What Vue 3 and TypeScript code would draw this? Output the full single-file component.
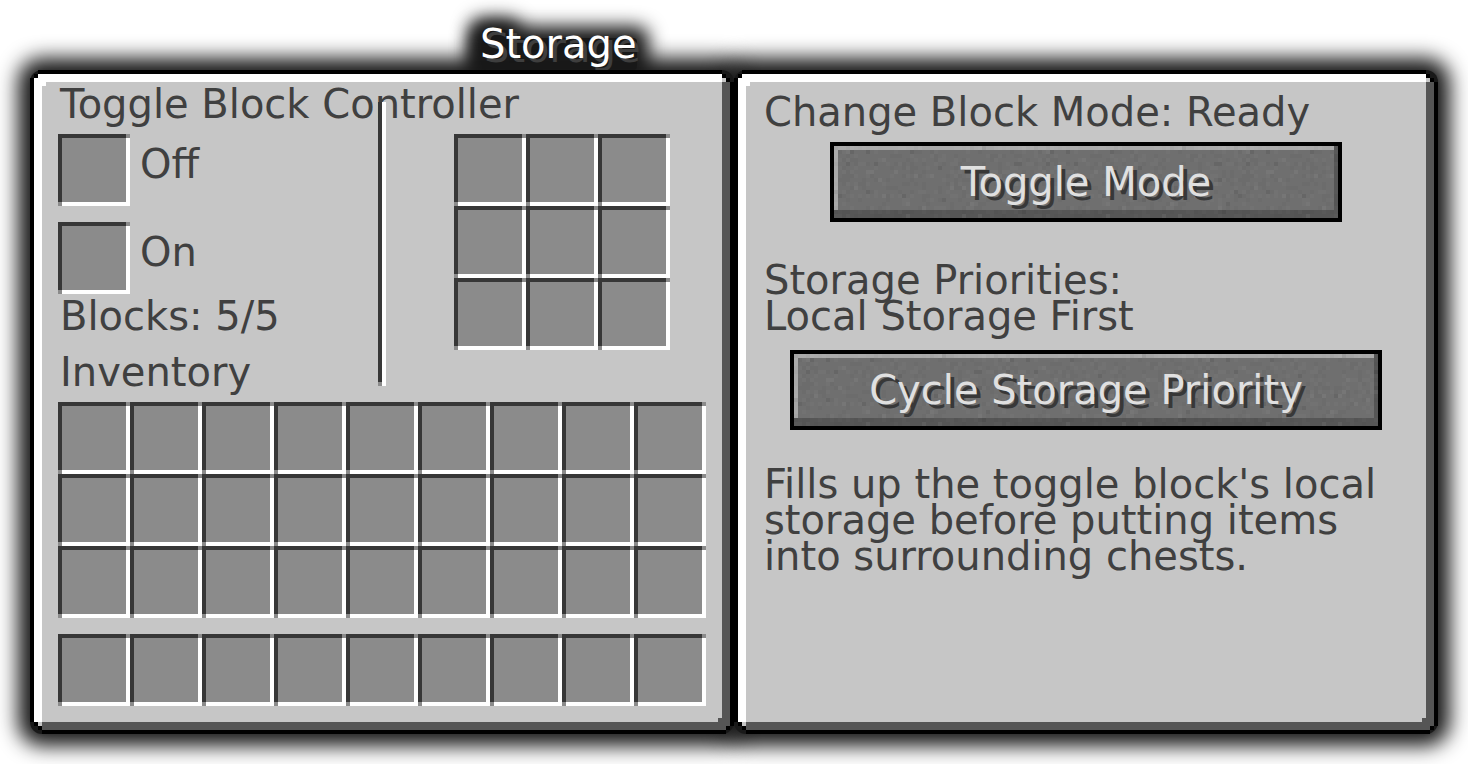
<script setup lang="ts">
interface Speck {
  x: number
  y: number
  tone: string
  alpha: number
}

const blockSlots = ['Off', 'On']
const priorityText = 'Storage Priorities:\nLocal Storage First'

// Stone grain, laid out on a grid of 4px cells with a fixed seed.
function grain(columns: number, rows: number): Speck[] {
  const specks: Speck[] = []
  let seed = 7919
  const next = () => {
    seed = (seed * 16807) % 2147483647
    return seed / 2147483647
  }
  for (let y = 0; y < rows; y++) {
    for (let x = 0; x < columns; x++) {
      const n = next()
      if (n < 0.2) specks.push({ x, y, tone: '#000', alpha: n < 0.02 ? 0.08 : 0.025 })
      else if (n > 0.8) specks.push({ x, y, tone: '#fff', alpha: n > 0.97 ? 0.05 : 0.02 })
    }
  }
  return specks
}

const specks = grain(50, 18)
</script>

<template>
  <main class="screen">
    <h1 class="title"><span class="title-text">Storage</span></h1>

    <div class="panels">
      <section class="panel">
        <div class="face storage">
          <h2 class="text">Toggle Block Controller</h2>
          <div class="upper">
            <div class="states">
              <div v-for="name in blockSlots" :key="name" class="state">
                <div class="slot"></div>
                <span class="text">{{ name }}</span>
              </div>
              <p class="text">Blocks: 5/5</p>
            </div>
            <div class="grid chest">
              <div v-for="n in 9" :key="n" class="slot"></div>
            </div>
            <div class="divider"></div>
          </div>
          <h2 class="text inventory-label">Inventory</h2>
          <div class="grid inventory">
            <div v-for="n in 27" :key="n" class="slot"></div>
          </div>
          <div class="grid inventory hotbar">
            <div v-for="n in 9" :key="n" class="slot"></div>
          </div>
        </div>
      </section>

      <section class="panel">
        <div class="face settings">
          <p class="text">Change Block Mode: Ready</p>
          <button type="button" class="stone mode">
            <svg class="grain" aria-hidden="true">
              <defs>
                <pattern id="grain" width="200" height="72" patternUnits="userSpaceOnUse">
                  <rect v-for="(s, i) in specks" :key="i" :x="s.x * 4" :y="s.y * 4" width="4" height="4" :fill="s.tone" :fill-opacity="s.alpha" />
                </pattern>
              </defs>
              <rect width="100%" height="100%" fill="url(#grain)" />
            </svg>
            <span class="label">Toggle Mode</span>
          </button>
          <p class="text priorities">{{ priorityText }}</p>
          <button type="button" class="stone priority">
            <svg class="grain" aria-hidden="true">
              <rect width="100%" height="100%" fill="url(#grain)" />
            </svg>
            <span class="label">Cycle Storage Priority</span>
          </button>
          <p class="text note">Fills up the toggle block's local storage before putting items into surrounding chests.</p>
        </div>
      </section>
    </div>
  </main>
</template>

<style>
body {
  margin: 0;
  background: #fff;
}
</style>

<style scoped>
.screen {
  position: relative;
  z-index: 0;
  box-sizing: border-box;
  padding: 26px 30px 30px;
  overflow: hidden;
  font-family: "DejaVu Sans", sans-serif;
  font-size: 40px;
  line-height: 36px;
  color: #404040;
}

h1,
h2,
p {
  margin: 0;
  font-size: inherit;
  font-weight: 400;
}

.title {
  display: flex;
  height: 44px;
  padding-left: 450px;
  color: #fff;
}

.title-text {
  position: relative;
  text-shadow: 4px 4px 0 #3e3e3e;
}

.title-text::before,
.title-text::after {
  content: "";
  position: absolute;
  z-index: -1;
  top: 12px;
  right: 0;
  bottom: 0;
  left: 2px;
  border-radius: 4px;
  background: #191919;
  box-shadow: 0 0 18px 12px #191919;
}

.title-text::after {
  top: 4px;
  right: 128px;
}

.panels {
  display: flex;
}

.panel {
  position: relative;
  flex: 1 1 0;
  min-width: 0;
}

.panel::before {
  content: "";
  position: absolute;
  z-index: -1;
  inset: 0;
  border-radius: 12px;
  background: #191919;
  box-shadow: 0 0 20px 12px #191919;
}

.face {
  box-sizing: border-box;
  height: 100%;
  border: 16px solid transparent;
  border-image: url("data:image/svg+xml,%3Csvg xmlns='http://www.w3.org/2000/svg' width='36' height='36' viewBox='0 0 9 9' shape-rendering='crispEdges'%3E%3Cpath d='M2 0h4v1h1v1h1v1h1v4h-1v1h-1v1h-4v-1h-1v-1h-1v-1h-1v-4h1v-1h1z'/%3E%3Cpath fill='%23c6c6c6' d='M2 2h5v1h-1v3h-3v1h-1z'/%3E%3Cpath fill='%23fff' d='M2 1h4v1h-1v1h-1v1h-1v2h-2v-4h1z'/%3E%3Cpath fill='%23fff' d='M3 2h3v1h-3z'/%3E%3Cpath fill='%23555' d='M6 3h2v4h-1v1h-4v-2h2v-1h1z'/%3E%3C/svg%3E") 16 fill;
}

.storage {
  padding: 0 12px 12px;
}

.storage > .text {
  padding-left: 2px;
}

.upper {
  position: relative;
  display: flex;
  justify-content: space-between;
  margin-top: 12px;
  padding-right: 36px;
}

.states {
  display: flex;
  flex-direction: column;
}

.state {
  display: flex;
  gap: 10px;
  margin-bottom: 16px;
}

.state .text {
  margin-top: 12px;
}

.states > p {
  margin-top: -12px;
  padding-left: 2px;
}

.divider {
  position: absolute;
  top: -32px;
  bottom: -36px;
  left: 320px;
  width: 4px;
  border-right: 4px solid #fff;
  background: linear-gradient(#373737, #373737) top / 100% calc(100% - 4px) no-repeat #8b8b8b;
}

.grid {
  display: grid;
  grid-auto-rows: 72px;
}

.chest {
  grid-template-columns: repeat(3, 72px);
}

.inventory {
  grid-template-columns: repeat(9, 72px);
}

.inventory-label {
  margin: 4px 0 12px;
}

.hotbar {
  margin-top: 16px;
}

.slot {
  box-sizing: border-box;
  width: 72px;
  height: 72px;
  border: 4px solid transparent;
  border-image: url("data:image/svg+xml,%3Csvg xmlns='http://www.w3.org/2000/svg' width='12' height='12' viewBox='0 0 3 3' shape-rendering='crispEdges'%3E%3Cpath fill='%238b8b8b' d='M0 0h3v3h-3z'/%3E%3Cpath fill='%23373737' d='M0 0h2v1h-1v1h-1z'/%3E%3Cpath fill='%23fff' d='M3 1v2h-2v-1h1v-1z'/%3E%3C/svg%3E") 4 fill;
}

.settings {
  display: flex;
  flex-direction: column;
  padding: 8px 14px;
}

.stone {
  position: relative;
  align-self: center;
  box-sizing: border-box;
  max-width: 100%;
  height: 80px;
  padding: 0;
  border: 4px solid #000;
  background: #6f6f6f;
  box-shadow: inset -4px -8px 0 #565656, inset 4px 4px 0 #a9a9a9;
  color: #e0e0e0;
  font: inherit;
  text-shadow: 4px 4px 0 #383838;
  cursor: pointer;
}

.mode {
  width: 512px;
  margin-top: 12px;
}

.priority {
  width: 592px;
  margin-top: 16px;
}

.grain {
  position: absolute;
  inset: 0;
  width: 100%;
  height: 100%;
}

.label {
  position: relative;
}

.priorities {
  margin-top: 40px;
  white-space: pre-line;
}

.note {
  margin-top: 36px;
}
</style>
